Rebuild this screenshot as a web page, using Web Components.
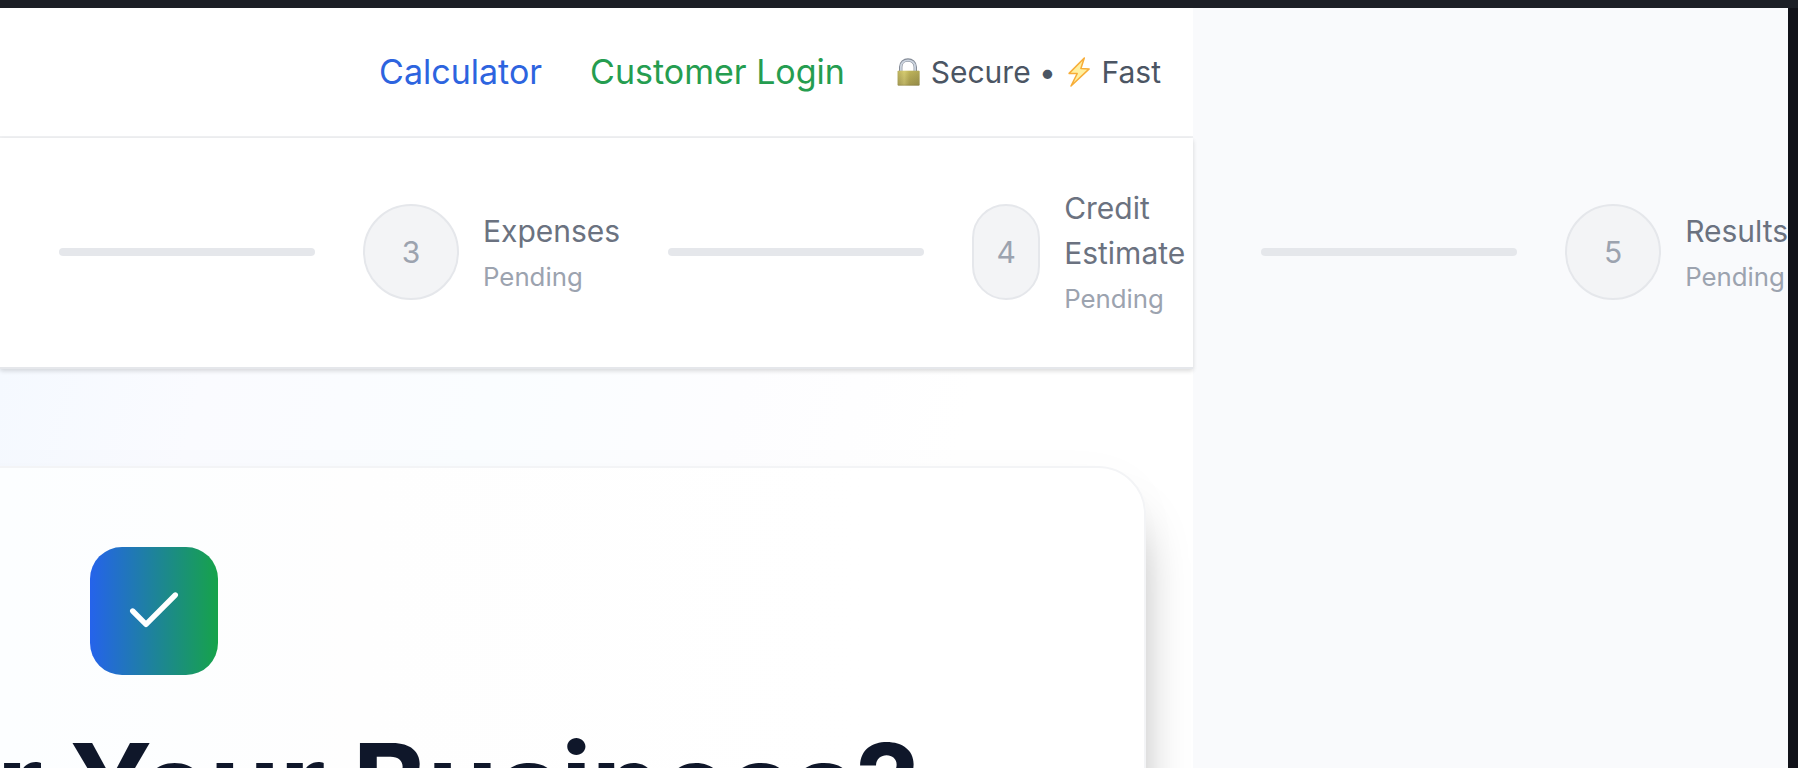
<!DOCTYPE html>
<html lang="en">
<head>
<meta charset="utf-8">
<title>Business Calculator</title>
<style>
html,body{margin:0;padding:0}
body{width:1798px;height:768px;overflow:hidden;background:#111219;font-family:Inter,"Liberation Sans",sans-serif;-webkit-font-smoothing:antialiased}
</style>
</head>
<body>
<app-window>
  <site-nav></site-nav>
  <progress-steps>
    <step-line></step-line>
    <step-item number="3" status="Pending" label="Expenses"></step-item>
    <step-line></step-line>
    <step-item number="4" status="Pending" label="Credit Estimate" compact></step-item>
    <step-line></step-line>
    <step-item number="5" status="Pending" label="Results"></step-item>
  </progress-steps>
  <hero-section>
    <hero-card>for Your Business?</hero-card>
  </hero-section>
</app-window>
<script>
const define = (name, html, setup) => customElements.define(name, class extends HTMLElement {
  connectedCallback() {
    if (this.shadowRoot) return;
    this.attachShadow({ mode: 'open' }).innerHTML = html;
    if (setup) setup(this, this.shadowRoot);
  }
});

define('app-window', `
<style>
:host{display:block;box-sizing:border-box;width:1798px;height:768px;padding:8px 10px 0 0;background:linear-gradient(#1c1f26,#1c1f26) top/100% 8px no-repeat,#111219;overflow:hidden}
.page{display:flex;flex-direction:column;width:1788px;height:760px;background:#f9fafc;overflow:hidden}
</style>
<div class="page"><slot></slot></div>`);

define('site-nav', `
<style>
:host{display:flex;flex:none;align-items:center;justify-content:flex-end;gap:48px;box-sizing:border-box;width:1193px;height:130px;padding:0 32px 0 0;background:#fff;border-bottom:2px solid #f0f1f3}
a{font-size:34px;line-height:48px;color:#2d64df}
a.login{color:#259d50}
p{display:flex;align-items:center;margin:0 0 0 .7px;font-size:30px;line-height:45px;color:#4b5563;white-space:pre}
svg{width:28.7px;height:36px;flex:none}
</style>
<a>Calculator</a><a class="login">Customer Login</a>
<p><svg viewBox="0 -1 28.7 36"><defs>
<linearGradient id="b" x1="0" x2="1" y1="0" y2="0"><stop offset="0" stop-color="#a79e55"/><stop offset=".3" stop-color="#c9c06d"/><stop offset=".55" stop-color="#a99f4f"/><stop offset="1" stop-color="#98904a"/></linearGradient>
<linearGradient id="v" x1="0" x2="0" y1="0" y2="1"><stop offset="0" stop-color="#fff27a" stop-opacity=".25"/><stop offset=".9" stop-color="#8d8044" stop-opacity=".2"/><stop offset="1" stop-color="#6b602c" stop-opacity=".6"/></linearGradient></defs>
<path d="M6.7 17V12C6.7 2.6 21.3 2.6 21.3 12v5" fill="none" stroke="#858c98" stroke-width="3.4"/>
<path d="M6.9 16V12C6.9 3.2 21.1 3.2 21.1 12v4" fill="none" stroke="#ccd4df" stroke-width="1.8"/>
<rect x="3.6" y="15.8" width="22" height="14.8" rx=".8" fill="url(#b)"/><rect x="3.6" y="15.8" width="22" height="14.8" rx=".8" fill="url(#v)"/></svg><span> Secure • </span><svg viewBox="0 -1 28.7 36"><path d="M20.3 3 5.1 18.4 13.2 18.6 7 31 25.2 13.9 16.9 13.6Z" fill="#fff0a0" stroke="#f7ad38" stroke-width="1.5" stroke-linejoin="round"/></svg><span> Fast</span></p>`);

define('progress-steps', `
<style>
:host{display:flex;flex:none;align-items:center;gap:48px;box-sizing:border-box;width:1193px;height:231px;padding:0 0 1px 59px;background:#fff;border-bottom:2px solid #e5e7eb;box-shadow:0 2px 4px rgba(0,0,0,.1),0 2px 6px rgba(0,0,0,.05);position:relative;z-index:1}
</style><slot></slot>`);

define('step-line', `<style>:host{display:block;flex:none;width:256px;height:8px;border-radius:4px;background:#e5e7eb}</style>`);

define('step-item', `
<style>
:host{display:flex;flex:none;align-items:center;gap:24px}
.dot{display:flex;flex:none;align-items:center;justify-content:center;box-sizing:border-box;width:96px;height:96px;border:2px solid #e5e7eb;border-radius:48px;background:#f3f4f6;color:#9ca3af;font-size:30px;line-height:45px}
:host([compact]) .dot{width:68px}
:host([compact]) .text{width:149px}
.label{font-size:30px;line-height:45px;color:#6b7280}
.status{margin-top:4px;font-size:25.8px;line-height:38px;color:#9ca3af}
</style>
<div class="dot"></div><div class="text"><div class="label"></div><div class="status"></div></div>`,
(el, root) => {
  root.querySelector('.dot').textContent = el.getAttribute('number');
  root.querySelector('.label').textContent = el.getAttribute('label');
  root.querySelector('.status').textContent = el.getAttribute('status');
});

define('hero-section', `
<style>
:host{display:block;flex:none;box-sizing:border-box;width:1193px;height:1200px;margin-top:-1px;padding:98px 47px 0 0;overflow:hidden;background:linear-gradient(104deg,#f5f9ff 0,#fafbff 200px,#fafdff 480px,#fdfdff 720px,#fff 950px)}
</style><slot></slot>`);

define('hero-card', `
<style>
:host{display:block;box-sizing:border-box;width:1984px;height:1100px;margin-left:-838px;padding:79px 0 0;border:2px solid #f3f4f6;border-radius:48px;background:linear-gradient(90deg,#fcfeff 838px,#fefefe 1200px,#fff 1700px);box-shadow:0 45px 50px -10px rgba(0,0,0,.34),0 8px 50px rgba(0,0,0,.025)}
.icon{display:flex;align-items:center;justify-content:center;width:128px;height:128px;margin:0 auto;border-radius:32px;background:linear-gradient(90deg,#2563eb,#16a34a)}
svg{width:64px;height:64px}
h1{margin:41px 225px 0 0;text-align:right;white-space:nowrap;font-size:113px;font-weight:700;line-height:136px;color:#0f172a}
</style>
<div class="icon"><svg viewBox="0 0 24 24" fill="none" stroke="#fff" stroke-width="2" stroke-linecap="round" stroke-linejoin="round"><path d="M20 6 9 17l-5-5"/></svg></div>
<h1><slot></slot></h1>`);
</script>
</body>
</html>
